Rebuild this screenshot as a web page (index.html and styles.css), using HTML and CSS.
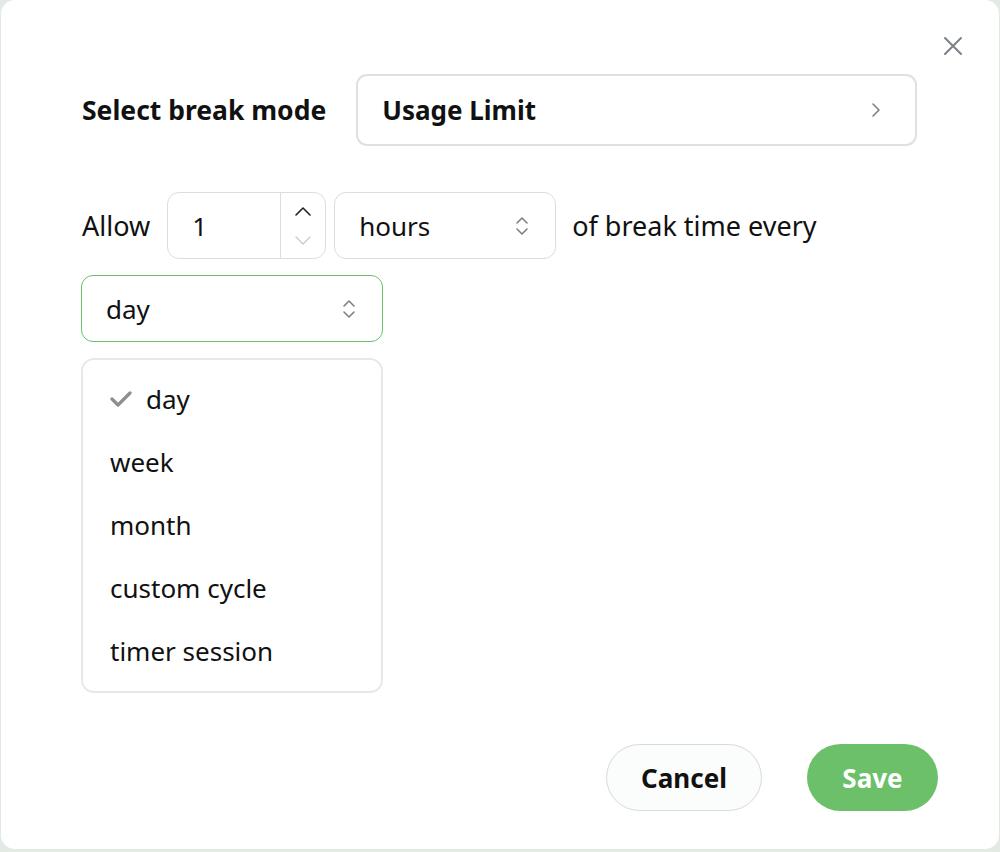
FILE: index.html
```html
<!DOCTYPE html>
<html lang="en">
<head>
    <meta charset="UTF-8">
    <meta name="viewport" content="width=device-width, initial-scale=1.0">
    <title>Break settings</title>
    <link rel="stylesheet" href="styles.css">
</head>
<body>
    <div class="dialog">
        <button class="close" aria-label="Close">
            <svg width="20" height="20" viewBox="0 0 20 20"><path d="M2 2L18 18M18 2L2 18" stroke="#7b8188" stroke-width="2" stroke-linecap="round"/></svg>
        </button>

        <div class="mode-row">
            <span class="label">Select break mode</span>
            <div class="mode-select">
                <span>Usage Limit</span>
                <svg width="12" height="18" viewBox="0 0 12 18"><path d="M3 3L9 9L3 15" fill="none" stroke="#7b8188" stroke-width="1.6" stroke-linecap="round" stroke-linejoin="round"/></svg>
            </div>
        </div>

        <div class="allow-row">
            <span>Allow</span>
            <div class="number">
                <span class="value">1</span>
                <div class="spin">
                    <svg width="20" height="14" viewBox="0 0 20 14"><path d="M3 10L10 3L17 10" fill="none" stroke="#222" stroke-width="1.6" stroke-linecap="round" stroke-linejoin="round"/></svg>
                    <svg width="20" height="14" viewBox="0 0 20 14"><path d="M3 4L10 11L17 4" fill="none" stroke="#c8ccd1" stroke-width="1.4" stroke-linecap="round" stroke-linejoin="round"/></svg>
                </div>
            </div>
            <div class="select hours">
                <span>hours</span>
                <svg class="updown" width="14" height="22" viewBox="0 0 14 22"><path d="M2 8L7 3L12 8M2 14L7 19L12 14" fill="none" stroke="#7b8188" stroke-width="1.6" stroke-linecap="round" stroke-linejoin="round"/></svg>
            </div>
            <span class="tail">of break time every</span>
        </div>

        <div class="select period active">
            <span>day</span>
            <svg class="updown" width="14" height="22" viewBox="0 0 14 22"><path d="M2 8L7 3L12 8M2 14L7 19L12 14" fill="none" stroke="#7b8188" stroke-width="1.6" stroke-linecap="round" stroke-linejoin="round"/></svg>
        </div>

        <ul class="menu">
            <li class="checked">
                <svg width="22" height="18" viewBox="0 0 22 18"><path d="M2 9L8 15L20 3" fill="none" stroke="#8e8e8e" stroke-width="3.2" stroke-linecap="round" stroke-linejoin="round"/></svg>
                day
            </li>
            <li>week</li>
            <li>month</li>
            <li>custom cycle</li>
            <li>timer session</li>
        </ul>

        <div class="actions">
            <button class="btn cancel">Cancel</button>
            <button class="btn save">Save</button>
        </div>
    </div>
</body>
</html>
```

FILE: styles.css
```css
body {
    margin: 0;
    background: #e3e9e3;
    font-family: "Noto Sans", "Open Sans", sans-serif;
    color: #111;
}

.dialog {
    position: relative;
    box-sizing: border-box;
    width: 998px;
    height: 849px;
    margin: 0 0 0 1px;
    background: #fff;
    border-radius: 14px;
    padding: 74px 82px 0 80px;
}

.close {
    position: absolute;
    top: 36px;
    right: 36px;
    border: none;
    background: none;
    padding: 0;
    cursor: pointer;
}

.mode-row {
    display: flex;
    align-items: center;
    gap: 30px;
}

.label {
    font-size: 26.5px;
    font-weight: 700;
    padding-left: 1px;
}

.mode-select {
    flex: 1;
    height: 72px;
    box-sizing: border-box;
    border: 2px solid #dde0e4;
    border-radius: 11px;
    display: flex;
    align-items: center;
    justify-content: space-between;
    padding: 0 33px 0 24px;
    font-size: 26px;
    font-weight: 700;
}

.allow-row {
    display: flex;
    align-items: center;
    margin-top: 46px;
    font-size: 27px;
    padding-left: 1px;
}

.number {
    margin-left: 17px;
    width: 159px;
    height: 67px;
    box-sizing: border-box;
    border: 1px solid #dadde1;
    border-radius: 12px;
    display: flex;
    font-size: 26px;
}

.number .value {
    flex: 1;
    display: flex;
    align-items: center;
    padding-left: 24px;
    border-right: 1px solid #dadde1;
}

.spin {
    width: 44px;
    display: flex;
    flex-direction: column;
    align-items: center;
    justify-content: center;
    gap: 14px;
}

.select {
    box-sizing: border-box;
    height: 67px;
    border: 1px solid #dadde1;
    border-radius: 12px;
    display: flex;
    align-items: center;
    justify-content: space-between;
    padding: 0 26px 0 24px;
    font-size: 26px;
}

.hours {
    width: 222px;
    margin: 0 16px 0 8px;
}

.period {
    width: 302px;
    margin-top: 16px;
}

.period.active {
    border-color: #6cc06a;
}

.menu {
    list-style: none;
    margin: 16px 0 0;
    padding: 7px 0 9px;
    width: 302px;
    box-sizing: border-box;
    border: 2px solid #e6e9ec;
    border-radius: 13px;
}

.menu li {
    height: 63px;
    display: flex;
    align-items: center;
    padding-left: 27px;
    font-size: 26px;
}

.menu li.checked svg {
    margin-right: 14px;
}

.actions {
    display: flex;
    justify-content: flex-end;
    gap: 45px;
    margin-top: 51px;
    margin-right: -21px;
}

.btn {
    height: 67px;
    border-radius: 34px;
    font-family: inherit;
    font-size: 26px;
    font-weight: 700;
    cursor: pointer;
}

.cancel {
    width: 156px;
    background: #fbfcfc;
    border: 1px solid #d6d9de;
    color: #111;
}

.save {
    width: 131px;
    background: #6cc06a;
    border: none;
    color: #fff;
}
```
